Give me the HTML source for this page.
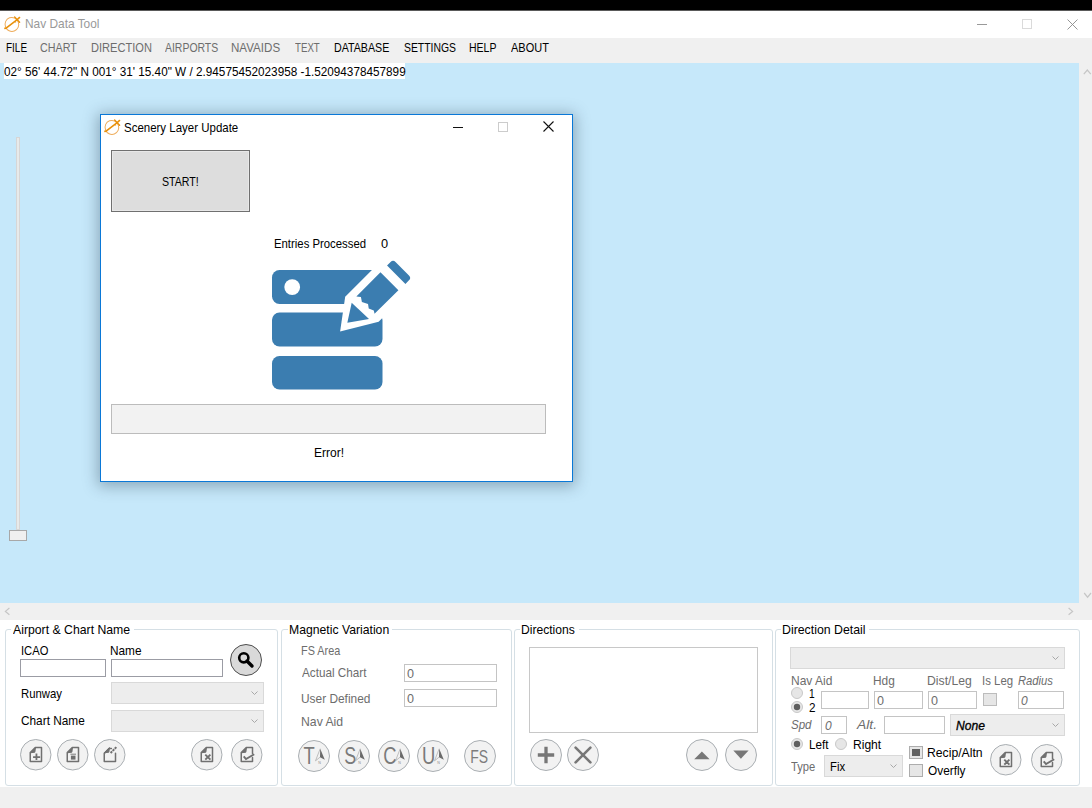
<!DOCTYPE html>
<html><head><meta charset="utf-8">
<style>
*{margin:0;padding:0;box-sizing:border-box}
html,body{width:1092px;height:808px;overflow:hidden;background:#f0f0f0;font-family:"Liberation Sans",sans-serif;color:#000}
.a{position:absolute}
.t{position:absolute;white-space:pre;transform-origin:0 0}
svg{position:absolute;overflow:visible}
</style></head><body>
<div class="a" style="left:0px;top:0px;width:1092px;height:10px;background:#000"></div>
<div class="a" style="left:0px;top:10px;width:1092px;height:1px;background:#5a5a5a"></div>
<div class="a" style="left:0px;top:11px;width:1092px;height:27px;background:#fff"></div>
<svg style="left:0px;top:13px" width="24" height="22" viewBox="0 0 24 22"><ellipse cx="11.9" cy="11.4" rx="6.8" ry="7" transform="rotate(-20 11.9 11.4)" fill="none" stroke="#eeac5a" stroke-width="1"/><path d="M5 15.6C4.6 14.8 5.2 15.2 6 15.2L17.2 6.6L19.6 4.4" fill="none" stroke="#e8900a" stroke-width="1.45" stroke-linecap="round"/><path d="M14.6 4L19.6 9.2" stroke="#e8900a" stroke-width="1.4" stroke-linecap="round"/><path d="M15 8.2L15.6 9.5" stroke="#e8900a" stroke-width="1"/></svg>

<div class="t" style="left:24.59px;top:17.00px;font-size:13px;line-height:13px;color:#999;transform:scaleX(0.9147);">Nav Data Tool</div>
<div class="a" style="left:977px;top:24px;width:10px;height:1px;background:#999"></div>
<div class="a" style="left:1022px;top:19px;width:10px;height:10px;border:1px solid #dadada"></div>
<svg style="left:1067px;top:19px" width="11" height="11"><path d="M0.5 0.5L10.5 10.5M10.5 0.5L0.5 10.5" stroke="#8a8a8a" stroke-width="0.9"/></svg>
<div class="a" style="left:0px;top:38px;width:1092px;height:25px;background:#f0f0f0"></div>
<div class="t" style="left:5.76px;top:41.00px;font-size:13px;line-height:13px;color:#000;transform:scaleX(0.7674);">FILE</div>
<div class="t" style="left:40.42px;top:41.00px;font-size:13px;line-height:13px;color:#6d6d6d;transform:scaleX(0.8257);">CHART</div>
<div class="t" style="left:91.06px;top:41.00px;font-size:13px;line-height:13px;color:#6d6d6d;transform:scaleX(0.8514);">DIRECTION</div>
<div class="t" style="left:165.00px;top:41.00px;font-size:13px;line-height:13px;color:#6d6d6d;transform:scaleX(0.8034);">AIRPORTS</div>
<div class="t" style="left:231.32px;top:41.00px;font-size:13px;line-height:13px;color:#6d6d6d;transform:scaleX(0.8916);">NAVAIDS</div>
<div class="t" style="left:294.78px;top:41.00px;font-size:13px;line-height:13px;color:#6d6d6d;transform:scaleX(0.7454);">TEXT</div>
<div class="t" style="left:334.10px;top:41.00px;font-size:13px;line-height:13px;color:#000;transform:scaleX(0.8207);">DATABASE</div>
<div class="t" style="left:403.52px;top:41.00px;font-size:13px;line-height:13px;color:#000;transform:scaleX(0.7994);">SETTINGS</div>
<div class="t" style="left:469.11px;top:41.00px;font-size:13px;line-height:13px;color:#000;transform:scaleX(0.8075);">HELP</div>
<div class="t" style="left:511.00px;top:41.00px;font-size:13px;line-height:13px;color:#000;transform:scaleX(0.8449);">ABOUT</div>
<div class="a" style="left:0px;top:63px;width:1079px;height:540px;background:#c6e8fa"></div>
<div class="a" style="left:4px;top:63px;width:401px;height:16px;background:#fff"></div>
<div class="t" style="left:3.55px;top:65.00px;font-size:13px;line-height:13px;color:#000;transform:scaleX(0.9035);">02° 56' 44.72" N 001° 31' 15.40" W / 2.94575452023958 -1.52094378457899</div>
<div class="a" style="left:1079px;top:63px;width:13px;height:540px;background:#f0f0f0"></div>
<svg style="left:1079px;top:63px" width="13" height="540"><path d="M4.8 11.2L8.3 7L11.8 11.2" fill="none" stroke="#c6c6c6" stroke-width="1.2"/><path d="M5.2 530L8.6 534.2L12 530" fill="none" stroke="#c6c6c6" stroke-width="1.2"/></svg>
<div class="a" style="left:0px;top:603px;width:1092px;height:17px;background:#f0f0f0"></div>
<svg style="left:0;top:603px" width="1092" height="17"><path d="M9.4 5L5.4 8.4L9.4 11.8" fill="none" stroke="#c6c6c6" stroke-width="1.2"/><path d="M1068.6 5L1072.6 8.4L1068.6 11.8" fill="none" stroke="#c6c6c6" stroke-width="1.2"/></svg>
<div class="a" style="left:16px;top:137px;width:4px;height:393px;background:#e7eaea;border:1px solid #d6d6d6"></div>
<div class="a" style="left:9px;top:530px;width:18px;height:11px;background:#f0f0f0;border:1px solid #a8a8a8"></div>
<div class="a" style="left:0px;top:620px;width:1092px;height:167px;background:#fff"></div>
<div class="a" style="left:100px;top:114px;width:473px;height:368px;background:#fff;border:1px solid #0a78d7;box-shadow:0 2px 14px 2px rgba(40,60,80,0.38)"></div>
<svg style="left:100px;top:116px" width="24" height="22" viewBox="0 0 24 22"><ellipse cx="11.9" cy="11.4" rx="6.8" ry="7" transform="rotate(-20 11.9 11.4)" fill="none" stroke="#eeac5a" stroke-width="1"/><path d="M5 15.6C4.6 14.8 5.2 15.2 6 15.2L17.2 6.6L19.6 4.4" fill="none" stroke="#e8900a" stroke-width="1.45" stroke-linecap="round"/><path d="M14.6 4L19.6 9.2" stroke="#e8900a" stroke-width="1.4" stroke-linecap="round"/><path d="M15 8.2L15.6 9.5" stroke="#e8900a" stroke-width="1"/></svg>

<div class="t" style="left:124.27px;top:120.50px;font-size:13px;line-height:13px;color:#000;transform:scaleX(0.8830);">Scenery Layer Update</div>
<div class="a" style="left:453px;top:127px;width:10px;height:1px;background:#111"></div>
<div class="a" style="left:498px;top:122px;width:10px;height:10px;border:1px solid #cccccc"></div>
<svg style="left:543px;top:121px" width="11" height="11"><path d="M0.5 0.5L10.5 10.5M10.5 0.5L0.5 10.5" stroke="#111" stroke-width="1.1"/></svg>
<div class="a" style="left:111px;top:150px;width:139px;height:62px;background:#dddddd;border:1px solid #707070;box-shadow:inset 0 0 0 1px #e8e8e8"></div>
<div class="t" style="left:162.21px;top:175.00px;font-size:13px;line-height:13px;color:#000;transform:scaleX(0.8171);">START!</div>
<div class="t" style="left:273.74px;top:237.00px;font-size:13px;line-height:13px;color:#000;transform:scaleX(0.8725);">Entries Processed</div>
<div class="t" style="left:380.71px;top:237.00px;font-size:13px;line-height:13px;color:#000;transform:scaleX(0.9839);">0</div>
<svg style="left:0;top:0" width="1092" height="808">
<g fill="#3b7db0">
<rect x="272" y="270" width="110.5" height="34" rx="7.5"/>
<rect x="272" y="312.5" width="110.5" height="34" rx="7.5"/>
<rect x="272" y="356" width="110.5" height="33.5" rx="7.5"/>
</g>
<circle cx="292.2" cy="287.1" r="7.9" fill="#fff"/>
<g transform="translate(389.45 281.35) rotate(-45)">
<polygon fill="#fff" points="30,-20.4 30,20.9 -36.2,20.9 -70.35,0.57 -42.2,-20.4"/>
<g fill="#3b7db0">
<path d="M9.5,-12.9 H14.5 A3.5,3.5 0 0 1 18,-9.4 V9.6 A3.5,3.5 0 0 1 14.5,13.1 H9.5 Z"/>
<polygon points="0,-12.7 0,12.66 -33.5,12.4 -31.6,9.5 -33.8,4.5 -31.2,0.9 -34,-4.95 -31.3,-9.05 -34.1,-12.7"/>
<polygon points="-41.9,-11.5 -41.0,12.1 -59.0,-0.57"/>
</g>
</g>
</svg>

<div class="a" style="left:111px;top:404px;width:435px;height:30px;background:#f2f2f2;border:1px solid #bcbcbc"></div>
<div class="t" style="left:313.68px;top:446.30px;font-size:13px;line-height:13px;color:#000;transform:scaleX(0.9238);">Error!</div>
<div class="a" style="left:5px;top:629px;width:273px;height:157px;border:1px solid #d5dfe5;border-radius:3px"></div>
<div class="a" style="left:11.1px;top:626px;width:122.6px;height:6px;background:#fff"></div>
<div class="t" style="left:13.10px;top:623.00px;font-size:13px;line-height:13px;color:#000;transform:scaleX(0.9426);">Airport &amp; Chart Name</div>
<div class="t" style="left:20.97px;top:644.00px;font-size:13px;line-height:13px;color:#000;transform:scaleX(0.8600);">ICAO</div>
<div class="t" style="left:110.00px;top:644.00px;font-size:13px;line-height:13px;color:#000;transform:scaleX(0.9091);">Name</div>
<div class="a" style="left:20px;top:659px;width:86px;height:18px;background:#fff;border:1px solid #9b9ca4"></div>
<div class="a" style="left:111px;top:659px;width:112px;height:18px;background:#fff;border:1px solid #9b9ca4"></div>
<svg style="left:230.00px;top:644.00px" width="32" height="32"><circle cx="16.0" cy="16.0" r="15.5" fill="#d9d9d9" stroke="#4d4d4d" stroke-width="1"/><circle cx="13.8" cy="13.8" r="4.6" fill="none" stroke="#000" stroke-width="2.6"/><path d="M17 17L22 22" stroke="#000" stroke-width="3.4" stroke-linecap="round"/></svg>
<div class="t" style="left:21.04px;top:687.00px;font-size:13px;line-height:13px;color:#000;transform:scaleX(0.8734);">Runway</div>
<div class="a" style="left:111px;top:682px;width:153px;height:22px;background:#ededed;border:1px solid #d9d9d9"></div>
<svg style="left:251px;top:691.0px" width="7" height="4"><path d="M0.5 0.5L3.5 3.5L6.5 0.5" fill="none" stroke="#a8a8a8" stroke-width="1"/></svg>
<div class="t" style="left:20.66px;top:714.00px;font-size:13px;line-height:13px;color:#000;transform:scaleX(0.9099);">Chart Name</div>
<div class="a" style="left:111px;top:710px;width:153px;height:22px;background:#ededed;border:1px solid #d9d9d9"></div>
<svg style="left:251px;top:719.0px" width="7" height="4"><path d="M0.5 0.5L3.5 3.5L6.5 0.5" fill="none" stroke="#a8a8a8" stroke-width="1"/></svg>
<svg style="left:19.75px;top:738.75px" width="31.5" height="31.5"><circle cx="15.75" cy="15.75" r="15.25" fill="#f2f2f2" stroke="#a9aeb2" stroke-width="1"/><path d="M10.25 22.6V13.6L15.25 8.6H21.5V22.6Z" fill="none" stroke="#707070" stroke-width="1.5" stroke-linejoin="round" stroke-linecap="round"/><path d="M10.25 13.8L15.45 8.6L14.85 13.2Z" fill="#707070" stroke="#707070" stroke-width="1" stroke-linejoin="round"/><path d="M16.45 14.4V21.1M13.05 18.1H20.15" stroke="#707070" stroke-width="1.8"/></svg>
<svg style="left:56.85px;top:738.75px" width="31.5" height="31.5"><circle cx="15.75" cy="15.75" r="15.25" fill="#f2f2f2" stroke="#a9aeb2" stroke-width="1"/><path d="M10.25 22.6V13.6L15.25 8.6H21.5V22.6Z" fill="none" stroke="#707070" stroke-width="1.5" stroke-linejoin="round" stroke-linecap="round"/><path d="M10.25 13.8L15.45 8.6L14.85 13.2Z" fill="#707070" stroke="#707070" stroke-width="1" stroke-linejoin="round"/><rect x="13.9" y="16.6" width="4.6" height="4" fill="#707070"/><path d="M13.4 15.2H19" stroke="#707070" stroke-width="0.9"/></svg>
<svg style="left:94.05px;top:738.75px" width="31.5" height="31.5"><circle cx="15.75" cy="15.75" r="15.25" fill="#f2f2f2" stroke="#a9aeb2" stroke-width="1"/><path d="M17.4 9.4H15.25L10.25 14.4V22.6H21.5V14.2" fill="none" stroke="#707070" stroke-width="1.5" stroke-linejoin="round" stroke-linecap="round"/><path d="M10.25 13.8L15.45 8.6L14.85 13.2Z" fill="#707070" stroke="#707070" stroke-width="1" stroke-linejoin="round"/><path d="M16.6 14L22.4 8" stroke="#707070" stroke-width="2" stroke-dasharray="2.2 0.8"/></svg>
<svg style="left:190.85px;top:738.75px" width="31.5" height="31.5"><circle cx="15.75" cy="15.75" r="15.25" fill="#f2f2f2" stroke="#a9aeb2" stroke-width="1"/><path d="M10.25 22.6V13.6L15.25 8.6H21.5V22.6Z" fill="none" stroke="#707070" stroke-width="1.5" stroke-linejoin="round" stroke-linecap="round"/><path d="M10.25 13.8L15.45 8.6L14.85 13.2Z" fill="#707070" stroke="#707070" stroke-width="1" stroke-linejoin="round"/><path d="M14.3 15.6L19.4 20.6M19.4 15.6L14.3 20.6" stroke="#707070" stroke-width="1.9"/></svg>
<svg style="left:230.65px;top:738.75px" width="31.5" height="31.5"><circle cx="15.75" cy="15.75" r="15.25" fill="#f2f2f2" stroke="#a9aeb2" stroke-width="1"/><path d="M21.5 18.6V22.6H10.25V13.6L15.25 8.6H21.5V14.6" fill="none" stroke="#707070" stroke-width="1.5" stroke-linejoin="round" stroke-linecap="round"/><path d="M10.25 13.8L15.45 8.6L14.85 13.2Z" fill="#707070" stroke="#707070" stroke-width="1" stroke-linejoin="round"/><path d="M12.7 17.3L15 20.1L23.2 15.2" fill="none" stroke="#707070" stroke-width="1.9"/></svg>
<div class="a" style="left:281px;top:629px;width:231px;height:157px;border:1px solid #d5dfe5;border-radius:3px"></div>
<div class="a" style="left:287.7px;top:626px;width:104.4px;height:6px;background:#fff"></div>
<div class="t" style="left:288.67px;top:623.00px;font-size:13px;line-height:13px;color:#000;transform:scaleX(0.9389);">Magnetic Variation</div>
<div class="t" style="left:300.68px;top:644.00px;font-size:13px;line-height:13px;color:#6d6d6d;transform:scaleX(0.8348);">FS Area</div>
<div class="t" style="left:301.60px;top:666.00px;font-size:13px;line-height:13px;color:#6d6d6d;transform:scaleX(0.9007);">Actual Chart</div>
<div class="a" style="left:404px;top:664px;width:93px;height:18px;background:#fff;border:1px solid #c4c4c4"></div>
<div class="t" style="left:406.82px;top:666.60px;font-size:13px;line-height:13px;color:#6d6d6d;transform:scaleX(0.9677);">0</div>
<div class="t" style="left:300.69px;top:691.50px;font-size:13px;line-height:13px;color:#6d6d6d;transform:scaleX(0.9149);">User Defined</div>
<div class="a" style="left:404px;top:689px;width:93px;height:18px;background:#fff;border:1px solid #c4c4c4"></div>
<div class="t" style="left:406.82px;top:691.60px;font-size:13px;line-height:13px;color:#6d6d6d;transform:scaleX(0.9677);">0</div>
<div class="t" style="left:300.57px;top:715.00px;font-size:13px;line-height:13px;color:#6d6d6d;transform:scaleX(0.9404);">Nav Aid</div>
<svg style="left:297.50px;top:740.00px" width="32" height="32"><circle cx="16.0" cy="16.0" r="15.5" fill="#f2f2f2" stroke="#a9aeb2" stroke-width="1"/><text x="0" y="0" font-family="Liberation Sans" font-size="23" fill="#7a7a7a" transform="translate(5.4 24) scale(0.8 1)">T</text><path d="M22.2 8.7L17.5 20.8L22 17.2" fill="none" stroke="#9a9a9a" stroke-width="0.6"/><path d="M22.2 8.7L22 17.2L26.8 19.8Z" fill="#6a6a6a"/><text x="20.3" y="23.8" font-family="Liberation Sans" font-size="3.6" fill="#8a8a8a">N</text></svg>
<svg style="left:337.50px;top:740.00px" width="32" height="32"><circle cx="16.0" cy="16.0" r="15.5" fill="#f2f2f2" stroke="#a9aeb2" stroke-width="1"/><text x="0" y="0" font-family="Liberation Sans" font-size="23" fill="#7a7a7a" transform="translate(6.2 24) scale(0.78 1)">S</text><path d="M22.2 8.7L17.5 20.8L22 17.2" fill="none" stroke="#9a9a9a" stroke-width="0.6"/><path d="M22.2 8.7L22 17.2L26.8 19.8Z" fill="#6a6a6a"/><text x="20.3" y="23.8" font-family="Liberation Sans" font-size="3.6" fill="#8a8a8a">N</text></svg>
<svg style="left:377.50px;top:740.00px" width="32" height="32"><circle cx="16.0" cy="16.0" r="15.5" fill="#f2f2f2" stroke="#a9aeb2" stroke-width="1"/><text x="0" y="0" font-family="Liberation Sans" font-size="23" fill="#7a7a7a" transform="translate(5.2 24) scale(0.8 1)">C</text><path d="M22.2 8.7L17.5 20.8L22 17.2" fill="none" stroke="#9a9a9a" stroke-width="0.6"/><path d="M22.2 8.7L22 17.2L26.8 19.8Z" fill="#6a6a6a"/><text x="20.3" y="23.8" font-family="Liberation Sans" font-size="3.6" fill="#8a8a8a">N</text></svg>
<svg style="left:417.40px;top:740.00px" width="32" height="32"><circle cx="16.0" cy="16.0" r="15.5" fill="#f2f2f2" stroke="#a9aeb2" stroke-width="1"/><text x="0" y="0" font-family="Liberation Sans" font-size="23" fill="#7a7a7a" transform="translate(5.0 24) scale(0.8 1)">U</text><path d="M22.2 8.7L17.5 20.8L22 17.2" fill="none" stroke="#9a9a9a" stroke-width="0.6"/><path d="M22.2 8.7L22 17.2L26.8 19.8Z" fill="#6a6a6a"/><text x="20.3" y="23.8" font-family="Liberation Sans" font-size="3.6" fill="#8a8a8a">N</text></svg>
<svg style="left:463.50px;top:740.00px" width="32" height="32"><circle cx="16.0" cy="16.0" r="15.5" fill="#f2f2f2" stroke="#a9aeb2" stroke-width="1"/><text x="0" y="0" font-family="Liberation Sans" font-size="17.5" fill="#7c7c7c" transform="translate(6.3 22.6) scale(0.8 1)">FS</text></svg>
<div class="a" style="left:514px;top:629px;width:259px;height:157px;border:1px solid #d5dfe5;border-radius:3px"></div>
<div class="a" style="left:520.4px;top:626px;width:58.3px;height:6px;background:#fff"></div>
<div class="t" style="left:521.38px;top:623.00px;font-size:13px;line-height:13px;color:#000;transform:scaleX(0.9306);">Directions</div>
<div class="a" style="left:529px;top:647px;width:229px;height:86px;background:#fff;border:1px solid #c8c8c8"></div>
<svg style="left:529.80px;top:739.00px" width="32" height="32"><circle cx="16.0" cy="16.0" r="15.5" fill="#f2f2f2" stroke="#a9aeb2" stroke-width="1"/><path d="M16 7.8V24.2M7.8 16H24.2" stroke="#777" stroke-width="3.3"/></svg>
<svg style="left:567.00px;top:739.00px" width="32" height="32"><circle cx="16.0" cy="16.0" r="15.5" fill="#f2f2f2" stroke="#a9aeb2" stroke-width="1"/><path d="M8.6 8.6L23.4 23.4M23.4 8.6L8.6 23.4" stroke="#777" stroke-width="2.6" stroke-linecap="round"/></svg>
<svg style="left:686.00px;top:739.00px" width="32" height="32"><circle cx="16.0" cy="16.0" r="15.5" fill="#f2f2f2" stroke="#a9aeb2" stroke-width="1"/><path d="M8.2 20.2H23.6L15.9 12.5Z" fill="#777"/></svg>
<svg style="left:724.90px;top:739.00px" width="32" height="32"><circle cx="16.0" cy="16.0" r="15.5" fill="#f2f2f2" stroke="#a9aeb2" stroke-width="1"/><path d="M8.3 11.4H23.6L15.9 19.7Z" fill="#777"/></svg>
<div class="a" style="left:775px;top:629px;width:305px;height:157px;border:1px solid #d5dfe5;border-radius:3px"></div>
<div class="a" style="left:781.3px;top:626px;width:87.7px;height:6px;background:#fff"></div>
<div class="t" style="left:782.26px;top:623.00px;font-size:13px;line-height:13px;color:#000;transform:scaleX(0.9478);">Direction Detail</div>
<div class="a" style="left:790px;top:647px;width:275px;height:22px;background:#ededed;border:1px solid #d9d9d9"></div>
<svg style="left:1052px;top:656.0px" width="7" height="4"><path d="M0.5 0.5L3.5 3.5L6.5 0.5" fill="none" stroke="#a8a8a8" stroke-width="1"/></svg>
<div class="t" style="left:790.68px;top:674.00px;font-size:13px;line-height:13px;color:#6d6d6d;transform:scaleX(0.9243);">Nav Aid</div>
<div class="t" style="left:872.80px;top:674.00px;font-size:13px;line-height:13px;color:#6d6d6d;transform:scaleX(0.9132);">Hdg</div>
<div class="t" style="left:926.57px;top:674.00px;font-size:13px;line-height:13px;color:#6d6d6d;transform:scaleX(0.9387);">Dist/Leg</div>
<div class="t" style="left:981.65px;top:674.00px;font-size:13px;line-height:13px;color:#6d6d6d;transform:scaleX(0.8772);">Is Leg</div>
<div class="t" style="left:1017.85px;top:674.00px;font-size:13px;line-height:13px;color:#6d6d6d;transform:scaleX(0.8643);font-style:italic;">Radius</div>
<svg style="left:791px;top:687px" width="12" height="12"><circle cx="6" cy="6" r="5.5" fill="#e6e6e6" stroke="#c8c8c8" stroke-width="1"/></svg>
<svg style="left:791px;top:701px" width="12" height="12"><circle cx="6" cy="6" r="5.5" fill="#e6e6e6" stroke="#c8c8c8" stroke-width="1"/><circle cx="6" cy="6" r="3.2" fill="#5f5f5f"/></svg>
<div class="t" style="left:809.21px;top:686.50px;font-size:13px;line-height:13px;color:#000;transform:scaleX(0.7857);">1</div>
<div class="t" style="left:809.46px;top:701.00px;font-size:13px;line-height:13px;color:#000;transform:scaleX(0.9000);">2</div>
<div class="a" style="left:821px;top:691px;width:48px;height:18px;background:#fff;border:1px solid #c4c4c4"></div>
<div class="a" style="left:874px;top:691px;width:49px;height:18px;background:#fff;border:1px solid #c4c4c4"></div>
<div class="t" style="left:876.92px;top:694.00px;font-size:13px;line-height:13px;color:#6d6d6d;transform:scaleX(0.9677);">0</div>
<div class="a" style="left:928px;top:691px;width:49px;height:18px;background:#fff;border:1px solid #c4c4c4"></div>
<div class="t" style="left:931.02px;top:694.00px;font-size:13px;line-height:13px;color:#6d6d6d;transform:scaleX(0.9677);">0</div>
<div class="a" style="left:983px;top:693px;width:14px;height:13px;background:#e6e6e6;border:1px solid #bcbcbc"></div>
<div class="a" style="left:1018px;top:691px;width:46px;height:18px;background:#fff;border:1px solid #c4c4c4"></div>
<div class="t" style="left:1020.95px;top:694.00px;font-size:13px;line-height:13px;color:#6d6d6d;transform:scaleX(0.9231);font-style:italic;">0</div>
<div class="t" style="left:790.65px;top:718.00px;font-size:13px;line-height:13px;color:#6d6d6d;transform:scaleX(0.8874);font-style:italic;">Spd</div>
<div class="a" style="left:821px;top:716px;width:26px;height:18px;background:#fff;border:1px solid #c4c4c4"></div>
<div class="t" style="left:825.45px;top:719.00px;font-size:13px;line-height:13px;color:#6d6d6d;transform:scaleX(0.9231);font-style:italic;">0</div>
<div class="t" style="left:857.14px;top:718.00px;font-size:13px;line-height:13px;color:#6d6d6d;transform:scaleX(1.0674);font-style:italic;">Alt.</div>
<div class="a" style="left:884px;top:716px;width:61px;height:18px;background:#fff;border:1px solid #c4c4c4"></div>
<div class="a" style="left:950px;top:714px;width:115px;height:22px;background:#ededed;border:1px solid #d9d9d9"></div>
<svg style="left:1052px;top:723.0px" width="7" height="4"><path d="M0.5 0.5L3.5 3.5L6.5 0.5" fill="none" stroke="#a8a8a8" stroke-width="1"/></svg>
<div class="t" style="left:955.53px;top:719.00px;font-size:13px;line-height:13px;color:#000;transform:scaleX(0.9305);font-style:italic;-webkit-text-stroke:0.35px #000;">None</div>
<svg style="left:791px;top:738px" width="12" height="12"><circle cx="6" cy="6" r="5.5" fill="#e6e6e6" stroke="#c8c8c8" stroke-width="1"/><circle cx="6" cy="6" r="3.2" fill="#5f5f5f"/></svg>
<div class="t" style="left:809.01px;top:738.00px;font-size:13px;line-height:13px;color:#000;transform:scaleX(0.8976);">Left</div>
<svg style="left:835px;top:738px" width="12" height="12"><circle cx="6" cy="6" r="5.5" fill="#e6e6e6" stroke="#c8c8c8" stroke-width="1"/></svg>
<div class="t" style="left:852.68px;top:738.00px;font-size:13px;line-height:13px;color:#000;transform:scaleX(0.9281);">Right</div>
<div class="t" style="left:791.44px;top:760.00px;font-size:13px;line-height:13px;color:#6d6d6d;transform:scaleX(0.8608);">Type</div>
<div class="a" style="left:824px;top:755px;width:79px;height:22px;background:#ededed;border:1px solid #d9d9d9"></div>
<svg style="left:890px;top:764.0px" width="7" height="4"><path d="M0.5 0.5L3.5 3.5L6.5 0.5" fill="none" stroke="#a8a8a8" stroke-width="1"/></svg>
<div class="t" style="left:829.54px;top:760.00px;font-size:13px;line-height:13px;color:#000;transform:scaleX(0.8696);">Fix</div>
<div class="a" style="left:909px;top:746px;width:14px;height:13px;background:#e6e6e6;border:1px solid #adadad"></div>
<div class="a" style="left:912px;top:749px;width:8px;height:7px;background:#616161"></div>
<div class="t" style="left:927.47px;top:746.00px;font-size:13px;line-height:13px;color:#000;transform:scaleX(0.9389);">Recip/Altn</div>
<div class="a" style="left:909px;top:764px;width:14px;height:13px;background:#e6e6e6;border:1px solid #adadad"></div>
<div class="t" style="left:927.95px;top:764.00px;font-size:13px;line-height:13px;color:#000;transform:scaleX(0.9111);">Overfly</div>
<svg style="left:990.25px;top:744.25px" width="31.5" height="31.5"><circle cx="15.75" cy="15.75" r="15.25" fill="#f2f2f2" stroke="#a9aeb2" stroke-width="1"/><path d="M10.25 22.6V13.6L15.25 8.6H21.5V22.6Z" fill="none" stroke="#707070" stroke-width="1.5" stroke-linejoin="round" stroke-linecap="round"/><path d="M10.25 13.8L15.45 8.6L14.85 13.2Z" fill="#707070" stroke="#707070" stroke-width="1" stroke-linejoin="round"/><path d="M14.3 15.6L19.4 20.6M19.4 15.6L14.3 20.6" stroke="#707070" stroke-width="1.9"/></svg>
<svg style="left:1031.25px;top:744.25px" width="31.5" height="31.5"><circle cx="15.75" cy="15.75" r="15.25" fill="#f2f2f2" stroke="#a9aeb2" stroke-width="1"/><path d="M21.5 18.6V22.6H10.25V13.6L15.25 8.6H21.5V14.6" fill="none" stroke="#707070" stroke-width="1.5" stroke-linejoin="round" stroke-linecap="round"/><path d="M10.25 13.8L15.45 8.6L14.85 13.2Z" fill="#707070" stroke="#707070" stroke-width="1" stroke-linejoin="round"/><path d="M12.7 17.3L15 20.1L23.2 15.2" fill="none" stroke="#707070" stroke-width="1.9"/></svg>
</body></html>
